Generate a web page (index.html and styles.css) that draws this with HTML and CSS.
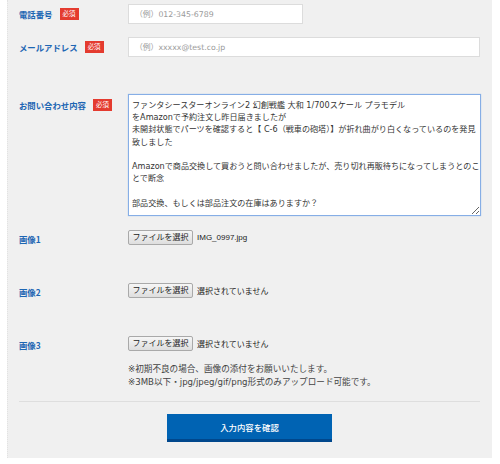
FILE: index.html
```html
<!DOCTYPE html>
<html lang="ja">
<head>
<meta charset="utf-8">
<title>お問い合わせ</title>
<link rel="stylesheet" href="styles.css">
</head>
<body>
<div class="page">
  <div class="row row-tel">
    <div class="label">電話番号<span class="req">必須</span></div>
    <div class="field"><input class="input input-short" type="text" placeholder="（例）012-345-6789"></div>
  </div>
  <div class="row row-mail">
    <div class="label">メールアドレス<span class="req">必須</span></div>
    <div class="field"><input class="input" type="text" placeholder="（例）xxxxx@test.co.jp"></div>
  </div>
  <div class="row row-msg">
    <div class="label label-top">お問い合わせ内容<span class="req">必須</span></div>
    <div class="field"><textarea class="textarea" wrap="off">ファンタシースターオンライン2 幻創戦艦 大和 1/700スケール プラモデル
をAmazonで予約注文し昨日届きましたが
未開封状態でパーツを確認すると【 C-6（戦車の砲塔）】が折れ曲がり白くなっているのを発見
致しました

Amazonで商品交換して買おうと問い合わせましたが、売り切れ再販待ちになってしまうとのこ
とで断念

部品交換、もしくは部品注文の在庫はありますか？</textarea></div>
  </div>
  <div class="row row-img row-img1">
    <div class="label label-img">画像1</div>
    <div class="field file"><span class="file-btn">ファイルを選択</span><span class="file-name">IMG_0997.jpg</span></div>
  </div>
  <div class="row row-img">
    <div class="label label-img">画像2</div>
    <div class="field file"><span class="file-btn">ファイルを選択</span><span class="file-name">選択されていません</span></div>
  </div>
  <div class="row row-img">
    <div class="label label-img">画像3</div>
    <div class="field file"><span class="file-btn">ファイルを選択</span><span class="file-name">選択されていません</span></div>
  </div>
  <div class="row row-notes">
    <div></div>
    <div class="notes">
      <p>※初期不良の場合、画像の添付をお願いいたします。</p>
      <p>※3MB以下・jpg/jpeg/gif/png形式のみアップロード可能です。</p>
    </div>
  </div>
  <hr class="divider">
  <div class="actions"><button class="submit" type="button">入力内容を確認</button></div>
</div>
</body>
</html>
```

FILE: styles.css
```css
* { box-sizing: border-box; }
html, body {
  margin: 0;
  padding: 0;
  background: #ffffff;
}
body {
  font-family: "DejaVu Sans", "Noto Sans CJK JP", sans-serif;
  color: #333333;
}
.page {
  margin-left: 7px;
  width: 485px;
  height: 458px;
  background: #f0f0f0;
  border-left: 1px dotted #e2e2e2;
  padding: 4px 12px 0 11px;
}
.row {
  display: grid;
  grid-template-columns: 109px 1fr;
  align-items: center;
}
.row-mail { margin-top: 13px; }
.row-msg { margin-top: 37px; align-items: start; }
.row-img1 { margin-top: 14px; }
.row-img { height: 15px; }
.row-img + .row-img { margin-top: 38px; }
.row-notes { margin-top: 12px; }

.label {
  font-family: "Noto Sans CJK JP", sans-serif;
  font-weight: bold;
  font-size: 8.4px;
  color: #1d66b3;
  display: flex;
  align-items: center;
  line-height: 12px;
}
.label-top { padding-top: 5px; }
.label-img { padding-top: 3px; }
.req {
  display: inline-block;
  margin-left: 7px;
  width: 19px;
  height: 12px;
  background: #e43b2f;
  color: #ffffff;
  font-size: 6.4px;
  font-weight: normal;
  line-height: 12px;
  text-align: center;
}
.input {
  display: block;
  width: 100%;
  height: 20px;
  border: 1px solid #dcdcdc;
  background: #ffffff;
  padding: 0 6px;
  font-family: "DejaVu Sans", "Noto Sans CJK JP", sans-serif;
  font-size: 7.8px;
  color: #333333;
  outline: none;
}
.input-short { width: 175px; }
.input::placeholder { color: #9a9a9a; }
.textarea {
  display: block;
  width: 353px;
  height: 122px;
  border: 1px solid #86aee6;
  box-shadow: 0 0 1px #9fc0ee;
  background: #ffffff;
  padding: 4px 3px;
  font-family: "DejaVu Sans", "Noto Sans CJK JP", sans-serif;
  font-size: 8.1px;
  line-height: 12.2px;
  color: #333333;
  white-space: pre;
  overflow: hidden;
  resize: both;
  outline: none;
}
.file {
  display: flex;
  align-items: center;
  font-family: "Liberation Sans", "Noto Sans CJK JP", sans-serif;
  font-size: 8px;
  color: #222222;
}
.file-btn {
  display: inline-block;
  width: 65px;
  height: 15px;
  line-height: 13px;
  border: 1px solid #a9a9a9;
  border-radius: 2px;
  background: linear-gradient(#f6f6f6, #dedede);
  text-align: center;
  color: #222222;
}
.file-name { margin-left: 4px; }
.notes {
  font-family: "DejaVu Sans", "Noto Sans CJK JP", sans-serif;
  font-size: 8.6px;
  line-height: 13px;
  color: #444444;
}
.notes p { margin: 0; }
.divider {
  margin: 12px 0 0 0;
  border: 0;
  height: 1px;
  background: #dedede;
}
.actions {
  display: flex;
  justify-content: center;
  padding-top: 12px;
}
.submit {
  width: 165px;
  height: 28px;
  border: 0;
  border-bottom: 3px solid #00478c;
  background: #0063b3;
  color: #ffffff;
  font-family: "Noto Sans CJK JP", sans-serif;
  font-size: 8.4px;
  font-weight: 500;
  padding: 0;
}
```
